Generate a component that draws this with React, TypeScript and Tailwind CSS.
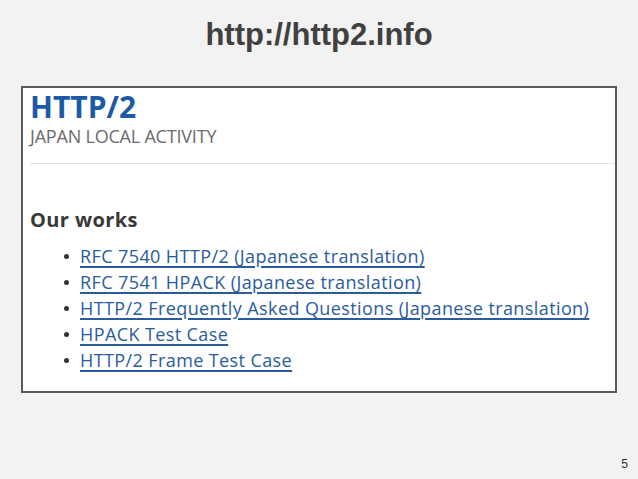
const WORKS = [
  'RFC 7540 HTTP/2 (Japanese translation)',
  'RFC 7541 HPACK (Japanese translation)',
  'HTTP/2 Frequently Asked Questions (Japanese translation)',
  'HPACK Test Case',
  'HTTP/2 Frame Test Case',
];

export default function App() {
  return (
    <div className="flex h-[479px] w-[638px] flex-col bg-[#f2f2f2]">
      <h1 className="pt-[19px] text-center font-['Liberation_Sans',Arial,sans-serif] text-[31px] font-bold leading-none text-[#404040]">
        http://http2.info
      </h1>

      <div className="mx-[21px] mt-[36px] h-[307px] border-2 border-[#5a5a5a] bg-white font-['Open_Sans',sans-serif]">
        <div className="pl-[7px] pt-[4px]">
          <div className="text-[30px] font-bold leading-none text-[#1d5aa6]">HTTP/2</div>
          <div className="mt-[5px] text-[18px] leading-none tracking-[-0.2px] text-[#6b6b6b]">JAPAN LOCAL ACTIVITY</div>
        </div>
        <div className="ml-[7px] mt-[18px] h-px bg-[#e2e2e2]" />

        <div className="pl-[7px]">
          <h2 className="mt-[46px] text-[20px] font-bold leading-none tracking-[0.4px] text-[#383838]">Our works</h2>
          <ul className="mt-[13px] pl-[34px]">
            {WORKS.map((w) => (
              <li key={w} className="flex items-center gap-[11px] text-[18px] leading-[26px] tracking-[0.4px]">
                <span className="h-[5px] w-[5px] rounded-full bg-[#333]" />
                <a href="#" className="text-[#2a5c9c] underline decoration-[1.5px] underline-offset-[3px]">
                  {w}
                </a>
              </li>
            ))}
          </ul>
        </div>
      </div>

      <div className="mt-auto flex justify-end pb-[6px] pr-[10px] font-['Liberation_Sans',Arial,sans-serif] text-[12px] text-[#333]">
        5
      </div>
    </div>
  );
}
